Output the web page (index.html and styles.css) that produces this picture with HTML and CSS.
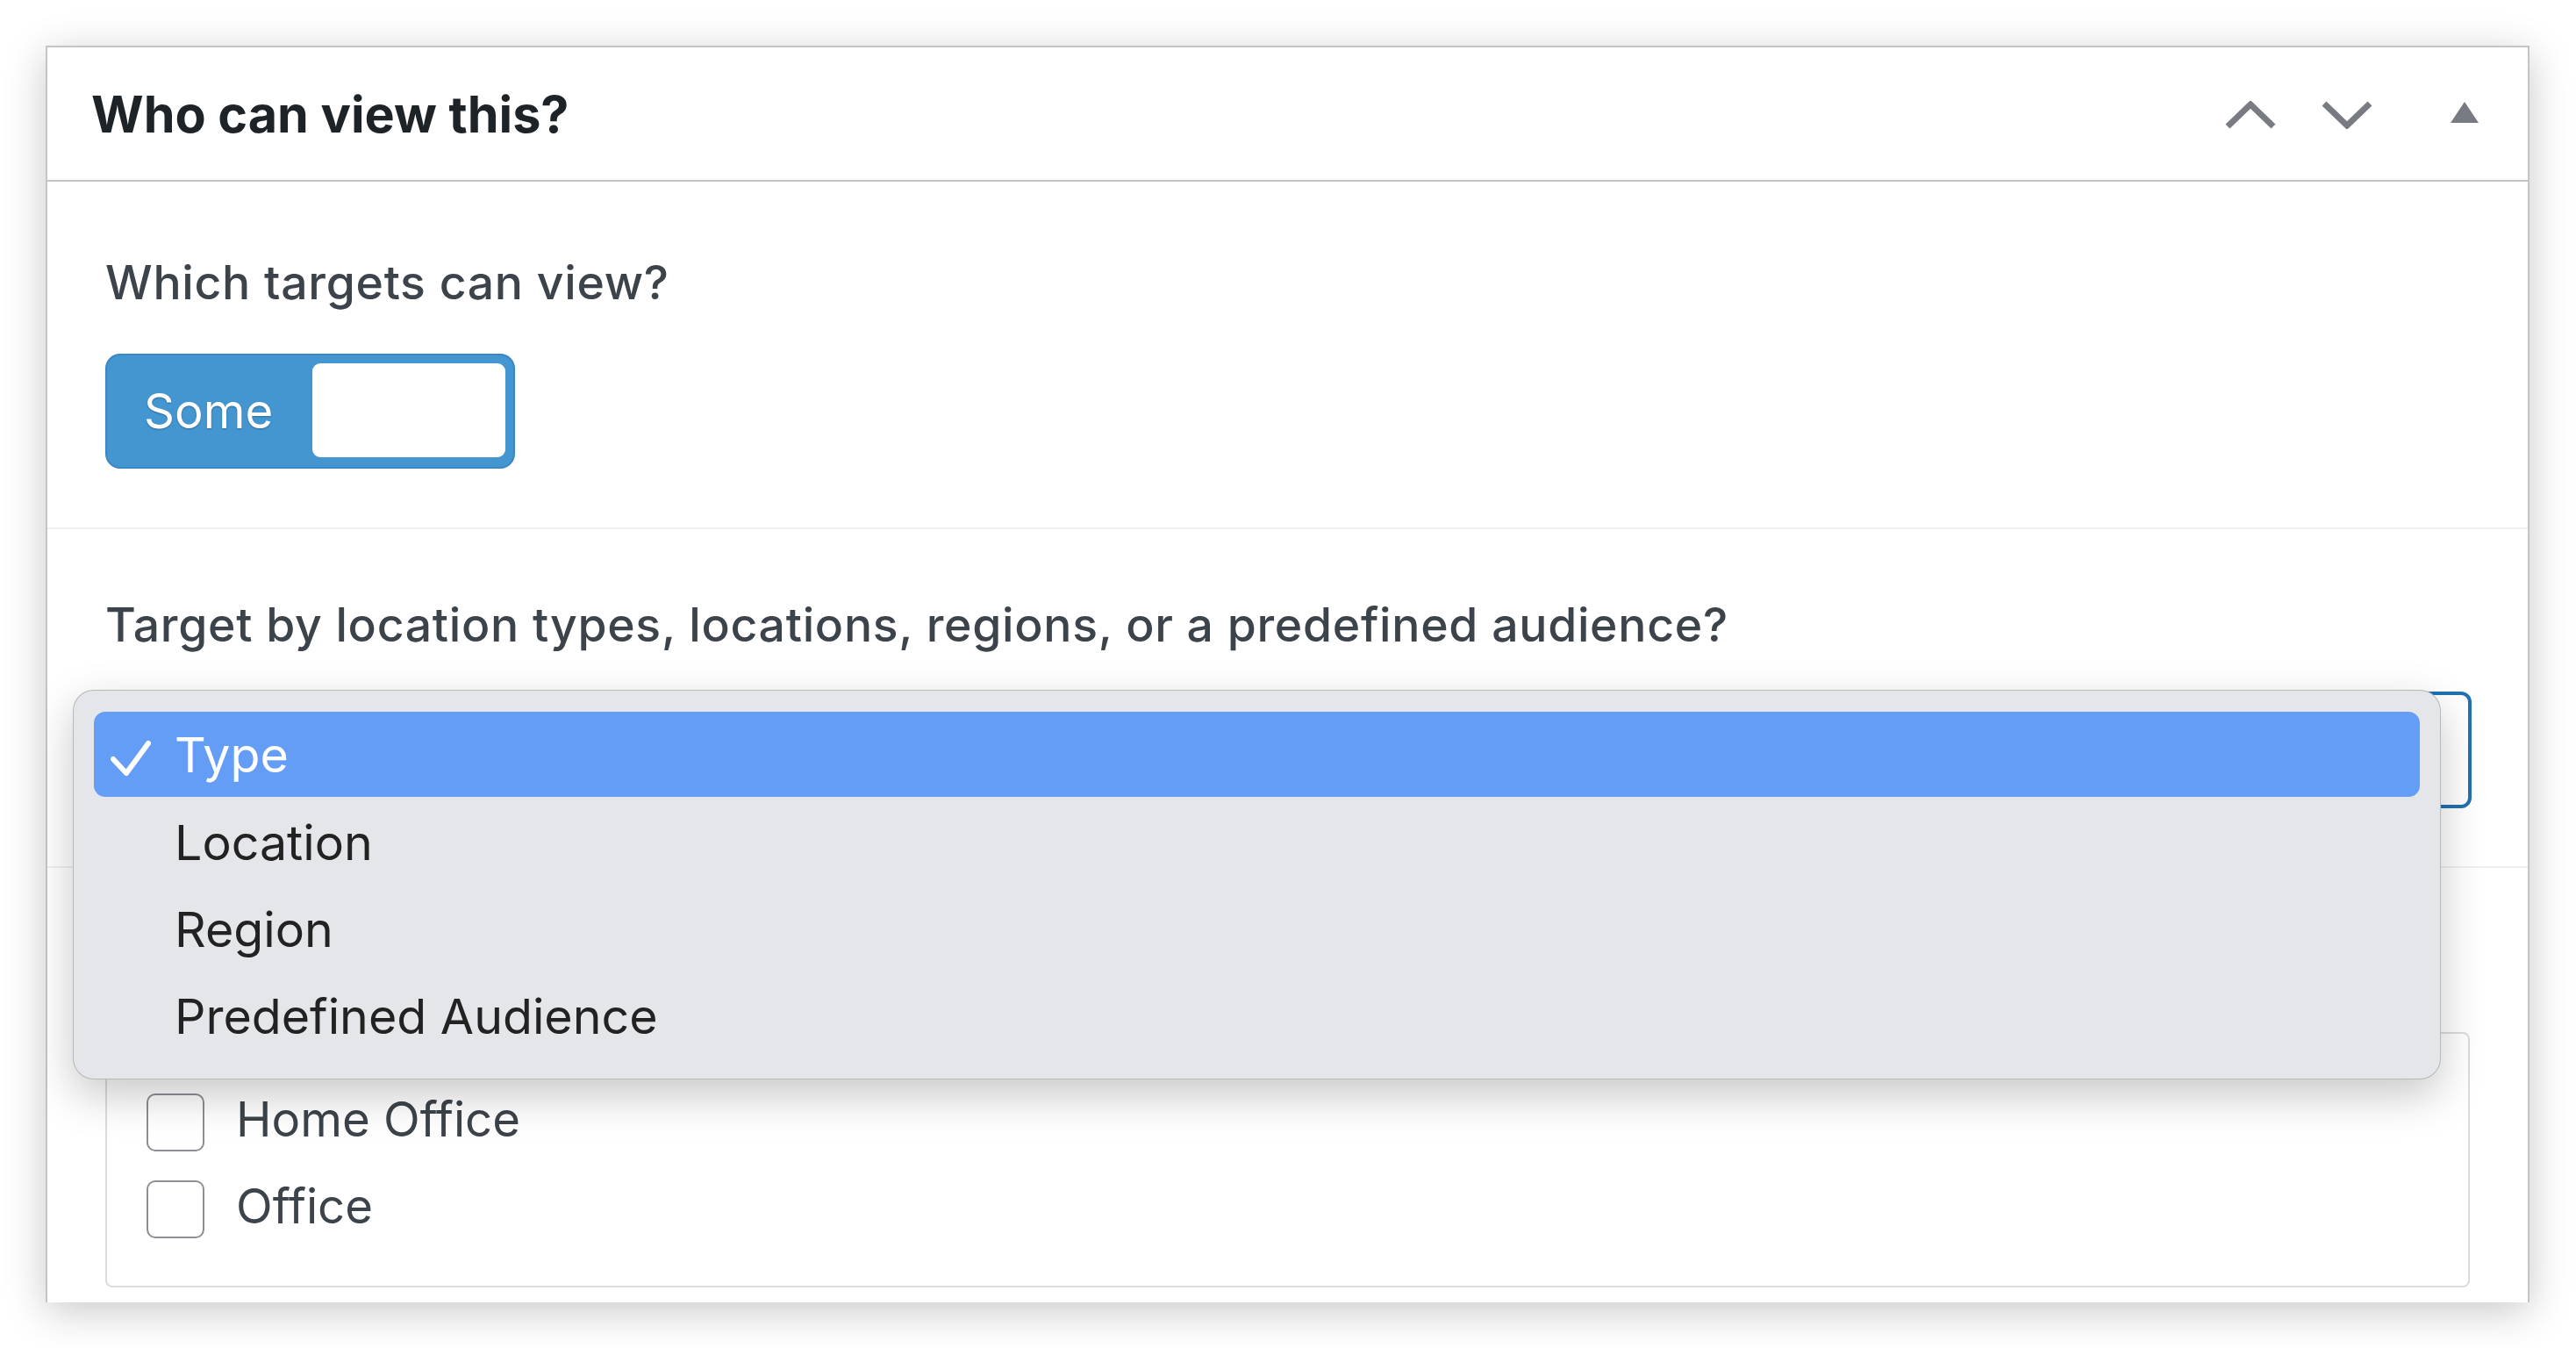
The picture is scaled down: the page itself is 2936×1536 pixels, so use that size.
FILE: index.html
```html
<!DOCTYPE html>
<html lang="en">
<head>
<meta charset="utf-8">
<title>Who can view this?</title>
<link rel="stylesheet" href="styles.css">
</head>
<body>
<div class="window">
  <div class="postbox">
    <div class="postbox-header">
      <h2 class="title">Who can view this?</h2>
      <div class="handle-actions">
        <button class="handle handle-up" type="button" aria-label="Move up">
          <svg width="58" height="32" viewBox="0 0 58 32"><polyline points="3,29 29,4 55,29" fill="none" stroke="#787c82" stroke-width="7"/></svg>
        </button>
        <button class="handle handle-down" type="button" aria-label="Move down">
          <svg width="58" height="32" viewBox="0 0 58 32"><polyline points="3,3 29,28 55,3" fill="none" stroke="#787c82" stroke-width="7"/></svg>
        </button>
        <button class="handle handle-toggle" type="button" aria-label="Toggle panel">
          <svg width="32" height="24" viewBox="0 0 32 24"><polygon points="16,0 32,24 0,24" fill="#787c82"/></svg>
        </button>
      </div>
    </div>
    <div class="inside">
      <div class="field field-first">
        <p class="label">Which targets can view?</p>
        <div class="switch">
          <span class="switch-text">Some</span>
          <span class="switch-thumb"></span>
        </div>
      </div>
      <div class="field field-second">
        <p class="label">Target by location types, locations, regions, or a predefined audience?</p>
        <div class="select"></div>
      </div>
      <div class="field field-third">
        <div class="checklist">
          <div class="check-row"><span class="checkbox"></span><span class="check-label">Home Office</span></div>
          <div class="check-row"><span class="checkbox"></span><span class="check-label">Office</span></div>
        </div>
      </div>
    </div>
  </div>
  <div class="menu">
    <div class="menu-item selected">
      <svg class="menu-check" width="46" height="42" viewBox="0 0 46 42"><polyline points="3,22 18,38 43,4" fill="none" stroke="#ffffff" stroke-width="6" stroke-linecap="round" stroke-linejoin="round"/></svg>
      <span>Type</span>
    </div>
    <div class="menu-item"><span>Location</span></div>
    <div class="menu-item"><span>Region</span></div>
    <div class="menu-item"><span>Predefined Audience</span></div>
  </div>
</div>
</body>
</html>
```
FILE: styles.css
```css
html, body {
  margin: 0;
  padding: 0;
  background: #ffffff;
}

body {
  font-family: Inter, "Noto Sans", "Liberation Sans", sans-serif;
  width: 2936px;
  height: 1536px;
  overflow: hidden;
}

.window {
  position: relative;
  margin: 52px 0 0 52px;
  width: 2831px;
  height: 1432px;
  overflow: hidden;
  box-shadow: 0 10px 44px rgba(0, 0, 0, 0.22);
  background: #ffffff;
}

.postbox {
  box-sizing: border-box;
  height: 100%;
  border: 2px solid #c3c4c7;
  border-bottom: none;
  background: #ffffff;
}

.postbox-header {
  display: flex;
  align-items: center;
  justify-content: space-between;
  height: 151px;
  border-bottom: 2px solid #c3c4c7;
  padding-left: 50px;
}

.title {
  margin: 0;
  font-size: 57.5px;
  font-weight: 700;
  color: #1d2327;
  line-height: 64px;
}

.handle-actions {
  display: flex;
  align-items: center;
  height: 100%;
}

.handle {
  display: flex;
  align-items: center;
  justify-content: center;
  height: 100%;
  padding: 0;
  margin: 0;
  border: none;
  background: transparent;
}

.handle-up,
.handle-down {
  width: 110px;
}

.handle-up svg,
.handle-down svg {
  margin-top: 2px;
}

.handle-down {
  margin-right: 7px;
}

.handle-toggle {
  width: 144px;
}

.handle-toggle svg {
  margin-top: -4px;
}

.field {
  padding-left: 66px;
  padding-right: 66px;
}

.field-first {
  padding-top: 85px;
  padding-bottom: 67px;
  border-bottom: 2px solid #f0f0f1;
}

.field-second {
  padding-top: 79px;
  padding-bottom: 68px;
  border-bottom: 2px solid #f0f0f1;
}

.field-third {
  padding-top: 187px;
}

.label {
  margin: 0;
  font-size: 53.5px;
  font-weight: 500;
  letter-spacing: 0.72px;
  line-height: 60px;
  color: #3c434a;
}

.switch {
  box-sizing: border-box;
  display: flex;
  justify-content: space-between;
  margin-top: 51px;
  width: 467px;
  height: 131px;
  padding: 11px 11px 13px 44px;
  border-radius: 17px;
  background: #4496d1;
  box-shadow: inset 0 0 0 2px rgba(40, 110, 170, 0.35);
}

.switch-text {
  align-self: center;
  font-size: 54.5px;
  line-height: 60px;
  color: #ffffff;
  text-shadow: 0 1px 2px rgba(0, 0, 0, 0.3);
}

.switch-thumb {
  width: 220px;
  height: 107px;
  border-radius: 9px;
  background: #ffffff;
}

.select {
  box-sizing: border-box;
  margin-top: 48px;
  height: 129px;
  border: 2px solid #2271b1;
  border-radius: 10px;
  box-shadow: 0 0 0 2px #2271b1;
  background: #ffffff;
}

.checklist {
  box-sizing: border-box;
  border: 2px solid #dcdcde;
  border-radius: 8px;
  padding: 51px 0 38px 45px;
}

.check-row {
  display: flex;
  align-items: center;
  height: 99px;
}

.checkbox {
  box-sizing: border-box;
  width: 66px;
  height: 66px;
  border: 2px solid #8c8f94;
  border-radius: 10px;
  background: #ffffff;
  margin-right: 36px;
}

.check-label {
  font-size: 54.5px;
  line-height: 60px;
  color: #3c434a;
  margin-top: -8px;
}

.menu {
  position: absolute;
  left: 31px;
  top: 734px;
  box-sizing: border-box;
  width: 2699px;
  height: 444px;
  padding: 24px 23px 22px;
  border: 1px solid rgba(0, 0, 0, 0.2);
  border-radius: 24px;
  background: #e4e6e9;
  box-shadow: 0 18px 50px rgba(0, 0, 0, 0.22);
}

.menu-item {
  position: relative;
  display: flex;
  align-items: center;
  height: 99px;
  padding-left: 92px;
  font-size: 55.5px;
  color: #222222;
  border-radius: 13px;
}

.menu-item.selected {
  height: 97px;
  margin-bottom: 2px;
  background: #639df5;
  color: #ffffff;
}

.menu-check {
  position: absolute;
  left: 19px;
  top: 32px;
}
```
